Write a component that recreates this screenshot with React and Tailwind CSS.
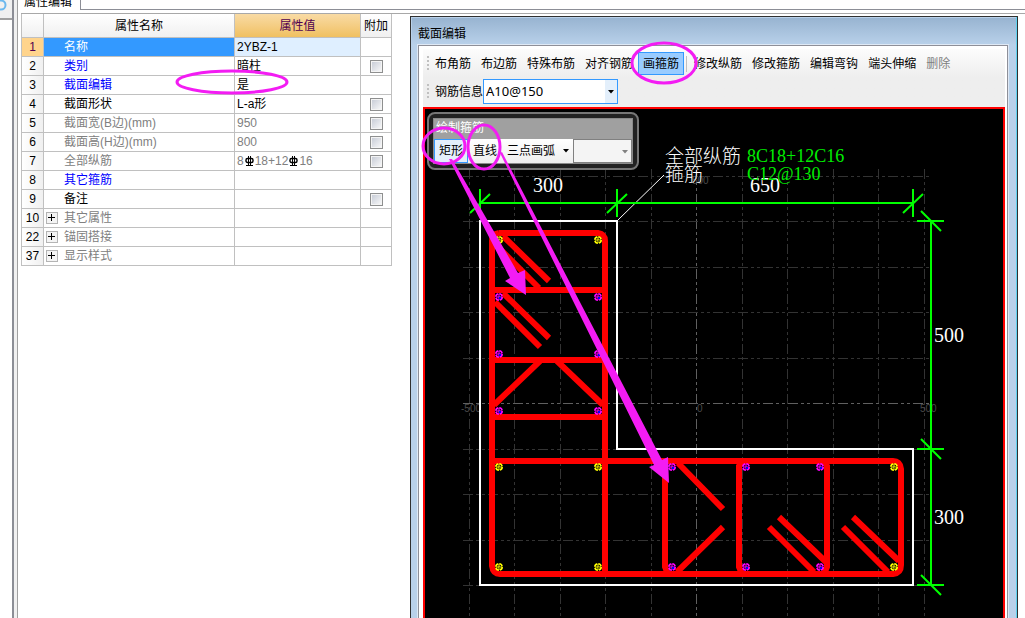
import React, { useState } from 'react';
import clsx from 'clsx';

const ROWS = [
  { no: 1, name: '名称', value: '2YBZ-1', selected: true },
  { no: 2, name: '类别', value: '暗柱', tone: 'blue', check: true },
  { no: 3, name: '截面编辑', value: '是', tone: 'blue' },
  { no: 4, name: '截面形状', value: 'L-a形', check: true },
  { no: 5, name: '截面宽(B边)(mm)', value: '950', tone: 'gray', check: true },
  { no: 6, name: '截面高(H边)(mm)', value: '800', tone: 'gray', check: true },
  { no: 7, name: '全部纵筋', bars: ['8', '18+12', '16'], tone: 'gray', check: true },
  { no: 8, name: '其它箍筋', tone: 'blue' },
  { no: 9, name: '备注', check: true },
  { no: 10, name: '其它属性', tone: 'gray', group: true },
  { no: 22, name: '锚固搭接', tone: 'gray', group: true },
  { no: 37, name: '显示样式', tone: 'gray', group: true },
];

const GRID_X = [469, 514, 560, 605, 651, 696, 742, 787, 833, 878, 924];
const GRID_Y = [176, 221, 267, 312, 358, 403, 449, 494, 540, 585];

const YELLOW_BARS = [[499, 240], [598, 240], [499, 467], [598, 467], [499, 567], [598, 567], [894, 467], [894, 567]];
const PINK_BARS = [
  [499, 297], [598, 297], [499, 354], [598, 354], [499, 411], [598, 411],
  [672, 467], [672, 567], [746, 467], [746, 567], [820, 467], [820, 567],
];

function GradeMark() {
  return (
    <svg width="9" height="10" viewBox="0 0 9 10" fill="none" stroke="#000" className="mx-px shrink-0">
      <rect x="1" y="2.5" width="7" height="4" rx="1.5" strokeWidth="1.4" />
      <path d="M3.5 0v9M5.5 0v9M1 9.5h7" />
    </svg>
  );
}

function PropertyRow({ row }) {
  const cell = 'h-[19px] p-0 border-r border-b border-[#c0c0c0] leading-[18px]';
  const color = row.selected ? 'text-white' : row.tone === 'blue' ? 'text-[#0000ff]' : row.tone === 'gray' ? 'text-[#808080]' : 'text-black';

  return (
    <tr>
      <th
        scope="row"
        className={clsx(cell, 'text-center font-normal', row.selected ? 'bg-[#ffd48c] text-[#500050]' : 'bg-gradient-to-r from-white to-[#f0f0f0]')}
      >
        {row.no}
      </th>
      <td className={clsx(cell, color, row.selected && 'bg-[#3399ff]')}>
        <div className={clsx('flex items-center', !row.group && 'pl-5')}>
          {row.group && (
            <button
              aria-label={`展开${row.name}`}
              className="ml-[2px] mr-[6px] flex size-3 items-center justify-center border border-[#b4b4b4] bg-[#f4f4f4]"
            >
              <svg width="8" height="8" viewBox="0 0 8 8" stroke="#000"><path d="M0 3.5h7M3.5 0v7" /></svg>
            </button>
          )}
          {row.name}
        </div>
      </td>
      <td className={clsx(cell, row.tone === 'gray' ? 'text-[#808080]' : 'text-black', row.selected && 'bg-[#dfefff]')}>
        <div className="flex items-center pl-[2px]">
          {row.bars ? (
            <>
              {row.bars[0]}<GradeMark />{row.bars[1]}<GradeMark />{row.bars[2]}
            </>
          ) : row.value}
        </div>
      </td>
      <td className={cell}>
        {row.check && (
          <input
            type="checkbox"
            aria-label={`附加 ${row.name}`}
            className="mx-auto block size-[13px] appearance-none border border-[#8e8f8f] bg-gradient-to-br from-[#c4c9d4] to-[#fbfbfb] shadow-[inset_0_0_0_1px_#f4f4f4] checked:bg-[#3399ff]"
          />
        )}
      </td>
    </tr>
  );
}

function PropertyTable() {
  const head = 'h-6 p-0 font-normal border-r border-b border-[#c0c0c0]';
  return (
    <table className="w-[371px] shrink-0 table-fixed border-separate border-spacing-0 self-start border-l border-[#c0c0c0]">
      <colgroup>
        <col className="w-[22px]" />
        <col className="w-[191px]" />
        <col className="w-[126px]" />
        <col className="w-[31px]" />
      </colgroup>
      <thead>
        <tr>
          <th className={clsx(head, 'bg-gradient-to-b from-white to-[#f0f0f0]')} />
          <th className={clsx(head, 'bg-gradient-to-b from-white to-[#f0f0f0]')}>属性名称</th>
          <th className={clsx(head, 'bg-gradient-to-b from-[#f9dba4] to-[#f0c060] text-[#500050]')}>属性值</th>
          <th className={clsx(head, 'bg-gradient-to-b from-white to-[#f0f0f0]')}>附加</th>
        </tr>
      </thead>
      <tbody>
        {ROWS.map((row) => <PropertyRow key={row.no} row={row} />)}
      </tbody>
    </table>
  );
}

function Grip() {
  return <span className="h-4 w-[2px] shrink-0 bg-[repeating-linear-gradient(#c0c0c0_0_2px,transparent_2px_4px)]" />;
}

function ToolButton({ active, disabled, children, onClick }) {
  return (
    <button
      onClick={onClick}
      disabled={disabled}
      className={clsx(
        'h-[23px] shrink-0 border px-1 leading-none whitespace-nowrap',
        active ? 'border-[#3399ff] bg-[#99ccff]' : 'border-transparent',
        disabled && 'text-[#808080]'
      )}
    >
      {children}
    </button>
  );
}

function Arrow({ className }) {
  return (
    <svg width="6" height="4" viewBox="0 0 6 4" className={clsx('pointer-events-none', className)}>
      <path d="M0 0h6L3 3.5z" fill="currentColor" />
    </svg>
  );
}

function Toolbar() {
  const [tool, setTool] = useState('画箍筋');
  const renderTool = (name) => (
    <ToolButton key={name} active={tool === name} onClick={() => setTool(name)}>{name}</ToolButton>
  );

  return (
    <div className="shrink-0 bg-gradient-to-b from-[#fcfcfc] to-[#eeeeee] to-50% pb-[3px]">
      <div className="flex items-center pt-[3px] pl-1">
        <Grip />
        <span className="w-px" />
        {['布角筋', '布边筋', '特殊布筋', '对齐钢筋', '画箍筋'].map(renderTool)}
        <span className="mx-[2px] h-4 w-px shrink-0 bg-[#c0c0c0]" />
        {['修改纵筋', '修改箍筋', '编辑弯钩', '端头伸缩'].map(renderTool)}
        <ToolButton disabled>删除</ToolButton>
      </div>
      <div className="mt-1 flex items-center pl-1">
        <Grip />
        <label htmlFor="bar-info" className="ml-[6px] shrink-0">钢筋信息</label>
        <div className="relative w-[135px]">
          <select
            id="bar-info"
            className="block h-[25px] w-full appearance-none border border-[#3399ff] bg-[linear-gradient(to_left,#e3effb_12px,#fff_12px)] pl-[2px] text-[13px] [font-family:'Noto_Sans',sans-serif]"
          >
            <option>A10@150</option>
          </select>
          <Arrow className="absolute top-[11px] right-1 text-black" />
        </div>
      </div>
    </div>
  );
}

function StirrupPalette() {
  return (
    <div className="absolute top-[3px] left-[2px] w-[212px] rounded-lg border-2 border-[#777777] bg-[#222222] p-1">
      <div className="border border-[#8a8a8a] bg-[#f0f0f0]">
        <div className="h-5 bg-[#a0a0a0] pl-[2px] leading-[18px] text-white">绘制箍筋</div>
        <div className="flex items-center bg-gradient-to-b from-white to-[#eeeeee]">
          <button className="h-6 shrink-0 border border-[#3399ff] bg-[#e3effb] px-1">矩形</button>
          <button className="h-6 shrink-0 px-[5px]">直线</button>
          <button className="flex h-6 shrink-0 items-center gap-2 pr-1 pl-[5px]">
            三点画弧
            <Arrow className="text-black" />
          </button>
          <div className="relative flex-1">
            <select aria-label="画弧参数" disabled className="block h-6 w-full appearance-none border border-[#808080] bg-[#f4f4f4]" />
            <Arrow className="absolute top-[11px] right-1 text-[#808080]" />
          </div>
        </div>
      </div>
    </div>
  );
}

function Rebar({ x, y, color, core }) {
  return (
    <g>
      <circle cx={x} cy={y} r="3.2" fill="#000" stroke={color} strokeWidth="1.6" strokeDasharray="4 1" />
      <path d={`M${x - 3} ${y}h6M${x} ${y - 3}v6`} stroke={color} strokeWidth="1" />
      <rect x={x} y={y} width="2" height="2" fill={core} />
    </g>
  );
}

function SectionDrawing() {
  return (
    <svg width="578" height="509" viewBox="425 109 578 509" className="block">
      {/* Axis grid */}
      <g strokeDasharray="10 3 3 3 3 3">
        {GRID_X.map((x) => (
          <path key={x} d={`M${x + 0.5} 169V616`} stroke={x === 696 ? '#606060' : '#333333'} />
        ))}
        {GRID_Y.map((y) => (
          <path key={y} d={`M463 ${y + 0.5}H932`} stroke={y === 403 ? '#606060' : '#333333'} />
        ))}
      </g>
      <g fill="#4a4a4a" fontSize="10" fontFamily="Liberation Sans, sans-serif">
        <text x="461" y="412">-500</text>
        <text x="697" y="412">0</text>
        <text x="920" y="412">500</text>
        <text x="692" y="184">500</text>
      </g>

      {/* Concrete outline */}
      <path d="M480 221H617V449H913V585H480Z" fill="none" stroke="#fff" strokeWidth="2" />
      <path d="M618 220L664 175" stroke="#fff" />

      {/* Stirrups */}
      <g fill="none" stroke="#f00" strokeWidth="6">
        <path d="M499 233H598Q605 234 605 241V574M499 233Q492 234 492 241V566Q493 574 500 574H893Q901 573 901 565V469Q900 461 893 461H492" />
        <path d="M492 290H605M492 360H605M492 417H605" />
        <path d="M665 461V567L668 574M742 461L739 466V567L742 574M824 461L827 466V567L824 574" />
        <path
          d="M503 236L549 281M495 244L539 288M503 293L549 338M495 302L540 347M540 361L494 405M557 361L603 405M678 463L723 509M723 527L677 572M769 527L814 572M779 517L827 563M843 527L888 572M853 517L899 561"
          strokeWidth="6"
        />
      </g>

      {YELLOW_BARS.map(([x, y]) => <Rebar key={`${x}-${y}`} x={x} y={y} color="#ffff00" core="#707000" />)}
      {PINK_BARS.map(([x, y]) => <Rebar key={`${x}-${y}`} x={x} y={y} color="#ff00ff" core="#0000ff" />)}

      {/* Dimensions */}
      <g stroke="#0f0" strokeWidth="2">
        <path d="M480 203H913M931 221V585" />
        {[480, 617, 913].map((x) => <path key={x} d={`M${x} 189v28M${x - 10} 213l20 -19`} />)}
        {[221, 449, 585].map((y) => <path key={y} d={`M917 ${y}h27M921 ${y - 10}l20 20`} />)}
      </g>
      <g fill="#fff" fontSize="20" fontFamily="Liberation Serif, serif">
        <text x="533" y="192">300</text>
        <text x="750" y="192">650</text>
        <text x="934" y="342">500</text>
        <text x="934" y="524">300</text>
      </g>
      <g fontSize="19" fontFamily="Liberation Serif, Noto Sans CJK SC, serif" fontWeight="300">
        <text x="665" y="163" fill="#fff">全部纵筋</text>
        <text x="665" y="181" fill="#fff">箍筋</text>
        <text x="747" y="162" fill="#00ee00" fontSize="18">8C18+12C16</text>
        <text x="747" y="180" fill="#00ee00" fontSize="18">C12@130</text>
      </g>
    </svg>
  );
}

function SectionWindow() {
  return (
    <section className="flex min-w-0 flex-1 flex-col border border-b-0 border-[#303030] bg-[#b9d1ea] p-px pb-0 shadow-[inset_-1px_0_0_#5fd3f0]">
      <h2 className="h-[27px] shrink-0 bg-gradient-to-b from-[#98b4d1] to-[#b9d1ea] pl-[6px] leading-[32px]">截面编辑</h2>
      <div className="mr-2 ml-[6px] flex min-h-0 flex-1 flex-col border border-b-0 border-[#8e8f98] bg-white pt-[3px] pr-[2px] pl-1 shadow-[0_0_0_1px_#dfe9f5]">
        <Toolbar />
        <div className="relative min-h-0 flex-1 overflow-hidden border-2 border-b-0 border-[#ff0000] bg-black">
          <SectionDrawing />
          <StirrupPalette />
        </div>
      </div>
    </section>
  );
}

// Hand-drawn callouts that sit above both panels
function Callouts() {
  return (
    <svg className="pointer-events-none absolute inset-0 h-full w-full" fill="none" stroke="#f31cf3" strokeWidth="3">
      <ellipse cx="232" cy="82" rx="55" ry="11" />
      <ellipse cx="664" cy="63" rx="32" ry="20" />
      <ellipse cx="444" cy="146" rx="21" ry="18" />
      <ellipse cx="484" cy="147" rx="16" ry="22" />
      <g fill="#f31cf3" stroke="none">
        <path d="M449 159L452 159L518 273L525 270L526 295L505 281L510 278Z" />
        <path d="M500 153L502 152L662 460L668 457L669 483L649 467L654 465Z" />
      </g>
    </svg>
  );
}

export default function App() {
  return (
    <div className="relative flex h-screen overflow-hidden bg-white text-[12px] text-black [font-family:'Liberation_Sans','Noto_Sans_CJK_SC',sans-serif]">
      <aside className="flex w-[14px] shrink-0 flex-col border-r-2 border-[#8c8e96]">
        <div className="h-5 border-b-2 border-[#a0a0a0] bg-[#f0f0f0]">
          <svg width="8" height="12" viewBox="0 0 8 12" fill="none">
            <circle cx="1" cy="5" r="4.5" stroke="#6cb8ee" strokeWidth="2" />
          </svg>
        </div>
      </aside>
      <div className="w-1 shrink-0 border-r border-[#a0a0a0] bg-[#f0f0f0]" />

      <main className="flex min-w-0 flex-1 flex-col">
        <div className="flex h-[10px] shrink-0 items-end">
          <button className="h-[10px] w-[62px] shrink-0 pl-[6px] text-left leading-3">
            <span className="-mt-[6px] block">属性编辑</span>
          </button>
          <span className="h-full flex-1 border-b border-l border-[#8c8e96]" />
        </div>
        <div className="mt-[3px] ml-[3px] flex min-h-0 flex-1 border-t border-[#a8a8a8]">
          <PropertyTable />
          <div className="mt-[2px] mr-[7px] ml-[18px] flex min-w-0 flex-1">
            <SectionWindow />
          </div>
        </div>
      </main>

      <Callouts />
    </div>
  );
}
